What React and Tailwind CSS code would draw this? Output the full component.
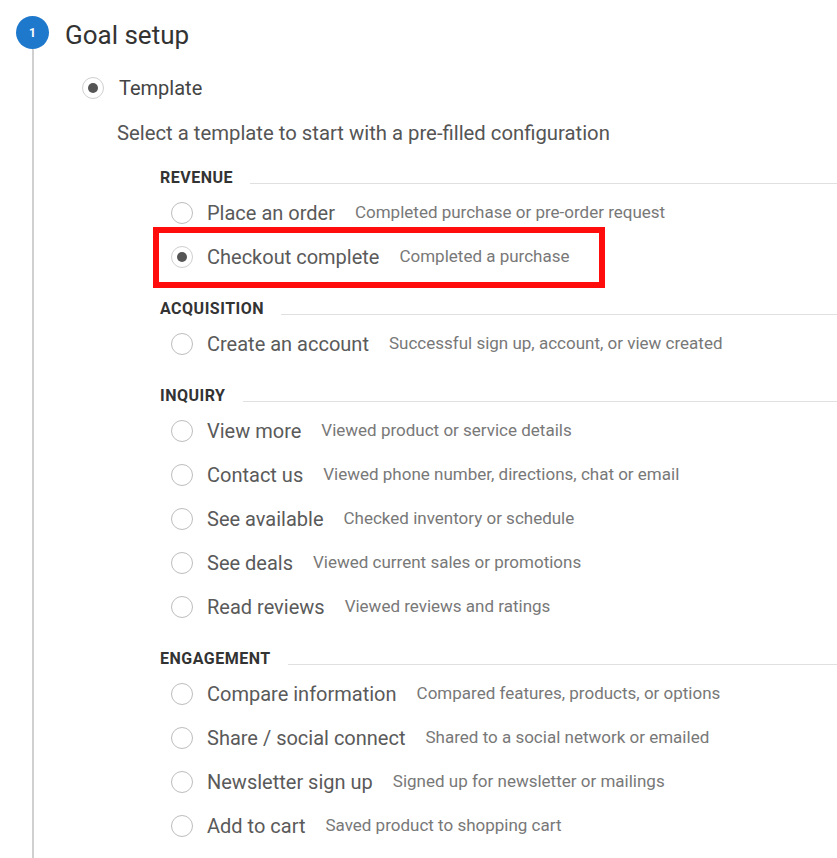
import React from 'react';

const SECTIONS = [
  {
    title: 'Revenue',
    items: [
      { label: 'Place an order', desc: 'Completed purchase or pre-order request' },
      { label: 'Checkout complete', desc: 'Completed a purchase', checked: true, highlight: true },
    ],
  },
  {
    title: 'Acquisition',
    items: [{ label: 'Create an account', desc: 'Successful sign up, account, or view created' }],
  },
  {
    title: 'Inquiry',
    items: [
      { label: 'View more', desc: 'Viewed product or service details' },
      { label: 'Contact us', desc: 'Viewed phone number, directions, chat or email' },
      { label: 'See available', desc: 'Checked inventory or schedule' },
      { label: 'See deals', desc: 'Viewed current sales or promotions' },
      { label: 'Read reviews', desc: 'Viewed reviews and ratings' },
    ],
  },
  {
    title: 'Engagement',
    items: [
      { label: 'Compare information', desc: 'Compared features, products, or options' },
      { label: 'Share / social connect', desc: 'Shared to a social network or emailed' },
      { label: 'Newsletter sign up', desc: 'Signed up for newsletter or mailings' },
      { label: 'Add to cart', desc: 'Saved product to shopping cart' },
    ],
  },
];

const Radio = ({ checked }) => (
  <span
    className={
      'flex h-[22px] w-[22px] shrink-0 items-center justify-center rounded-full border-[1.5px] bg-white ' +
      (checked ? 'border-[#cfcfcf]' : 'border-[#bdbdbd]')
    }
  >
    {checked && <span className="h-[10px] w-[10px] rounded-full bg-[#555]" />}
  </span>
);

const OptionRow = ({ label, desc, checked, highlight }) => (
  <div className="relative flex h-[44px] items-center pl-[11px]">
    <Radio checked={checked} />
    <span className="ml-[14px] text-[20px] text-[#5a5a5a]">{label}</span>
    <span className="ml-[20px] text-[17px] text-[#787878]">{desc}</span>
    {highlight && (
      <div className="pointer-events-none absolute left-[-7px] top-[-8px] h-[61px] w-[452px] border-[6px] border-[#ff0d0d]" />
    )}
  </div>
);

const Section = ({ title, items }) => (
  <div className="mb-[17px]">
    <div className="flex h-[26px] items-center gap-[17px]">
      <span className="text-[16px] font-bold uppercase tracking-[0.5px] text-[#333]">{title}</span>
      <div className="mt-[10px] h-px flex-1 bg-[#e0e0e0]" />
    </div>
    {items.map((it) => (
      <OptionRow key={it.label} {...it} />
    ))}
  </div>
);

export default function App() {
  return (
    <div
      className="flex h-[858px] w-full overflow-hidden bg-white"
      style={{ fontFamily: 'Roboto, "Noto Sans", sans-serif' }}
    >
      <div className="flex w-[65px] shrink-0 flex-col items-center pt-[16px]">
        <div className="flex h-[33px] w-[33px] items-center justify-center rounded-full bg-[#1e78cc] text-[12px] font-bold text-white">
          1
        </div>
        <div className="w-[2px] flex-1 bg-[#d0d0d0]" />
      </div>

      <div className="flex-1 pt-[16px]">
        <div className="flex h-[38px] items-center text-[26px] text-[#333]">Goal setup</div>

        <div className="mt-[12px] flex h-[44px] items-center pl-[17px]">
          <Radio checked />
          <span className="ml-[15px] text-[20px] text-[#444]">Template</span>
        </div>

        <div className="mt-[1px] flex h-[44px] items-center pl-[52px] text-[20.3px] text-[#555]">
          Select a template to start with a pre-filled configuration
        </div>

        <div className="mt-[10px] pl-[95px]">
          {SECTIONS.map((s) => (
            <Section key={s.title} {...s} />
          ))}
        </div>
      </div>
    </div>
  );
}
